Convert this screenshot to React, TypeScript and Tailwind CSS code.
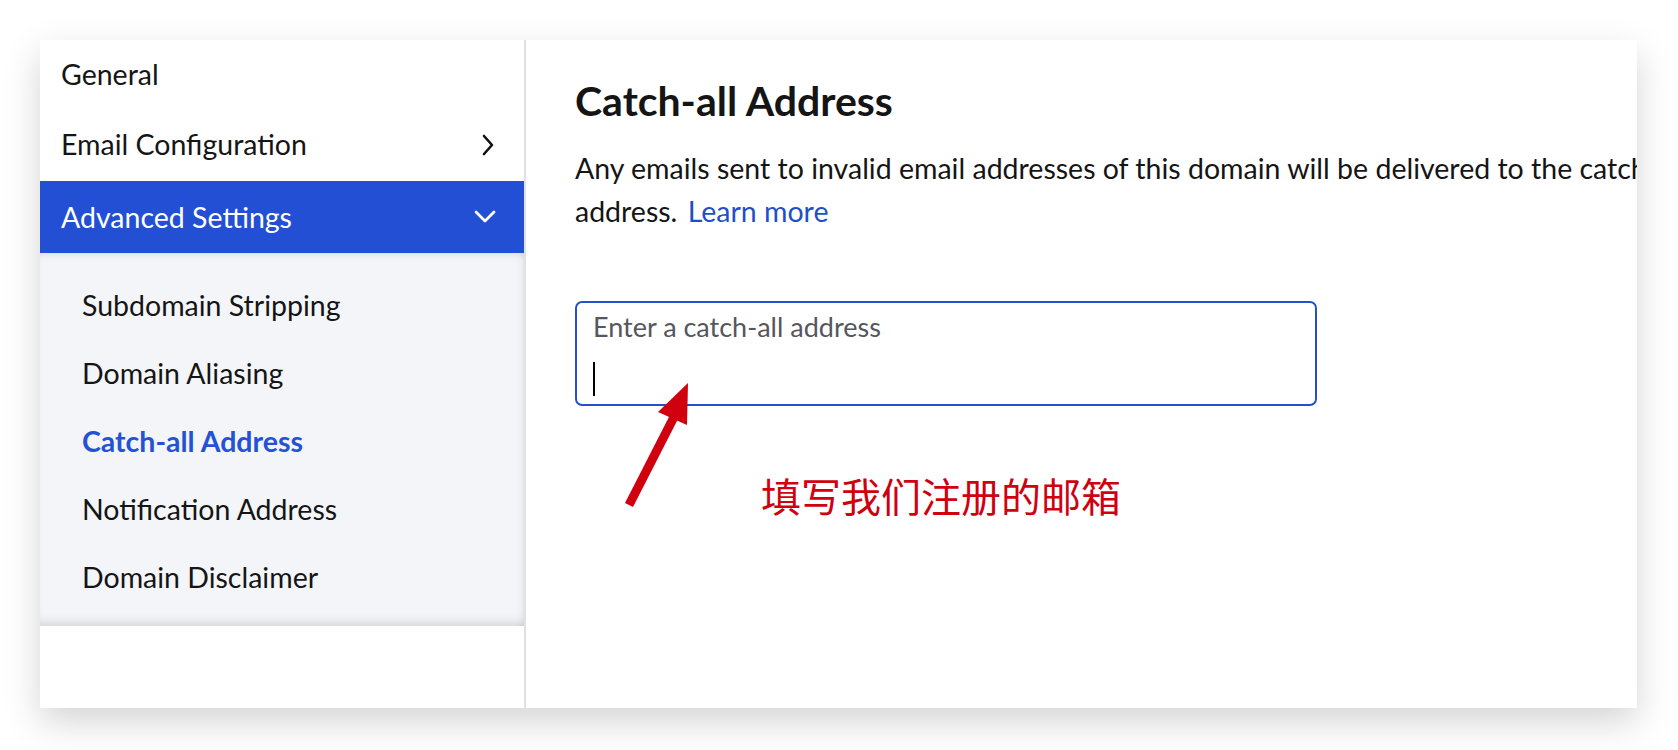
import React from 'react';

const subItems = [
  { label: 'Subdomain Stripping', active: false },
  { label: 'Domain Aliasing', active: false },
  { label: 'Catch-all Address', active: true },
  { label: 'Notification Address', active: false },
  { label: 'Domain Disclaimer', active: false },
];

function ChevronRight() {
  return (
    <svg width="12" height="22" viewBox="0 0 12 22" fill="none">
      <path d="M2 2 L10 11 L2 20" stroke="#111" strokeWidth="2.6" strokeLinecap="round" strokeLinejoin="round" />
    </svg>
  );
}

function ChevronDown() {
  return (
    <svg width="22" height="14" viewBox="0 0 22 14" fill="none">
      <path d="M2 2 L11 11 L20 2" stroke="#fff" strokeWidth="2.8" strokeLinecap="round" strokeLinejoin="round" />
    </svg>
  );
}

function Sidebar() {
  return (
    <aside className="w-[486px] shrink-0 flex flex-col border-r-2 border-[#e1e1e3] bg-white">
      <div className="h-[68px] flex items-center pl-[21px] text-[28.5px] text-[#151515]">General</div>
      <div className="h-[73px] flex items-center justify-between pl-[21px] pr-[30px] text-[28.5px] text-[#151515]">
        <span>Email Configuration</span>
        <ChevronRight />
      </div>
      <div className="h-[72px] flex items-center justify-between pl-[21px] pr-[28px] bg-[#224fd4] text-[28.5px] text-white">
        <span>Advanced Settings</span>
        <ChevronDown />
      </div>
      <div className="h-[373px] bg-[#f4f5f9] pt-[18px] pl-[42px] shadow-[inset_0_8px_10px_-8px_rgba(0,0,0,0.14),inset_0_-10px_12px_-8px_rgba(0,0,0,0.16),inset_-8px_0_10px_-8px_rgba(0,0,0,0.1)]">
        {subItems.map((item) => (
          <div
            key={item.label}
            className={`h-[68px] flex items-center text-[28.5px] ${
              item.active ? 'font-bold text-[#2452d6]' : 'text-[#151515]'
            }`}
          >
            {item.label}
          </div>
        ))}
      </div>
      <div className="flex-1 bg-white" />
    </aside>
  );
}

function Annotation() {
  return (
    <div className="relative h-[120px]">
      <svg className="absolute left-[40px] top-[-25px]" width="80" height="135" viewBox="0 0 80 135" fill="none">
        <path d="M14 124 L60 34" stroke="#d0000f" strokeWidth="9" />
        <path d="M73 2 L43 31 L72 44 Z" fill="#d0000f" />
      </svg>
      <div className="absolute left-[186px] top-[64px] text-[40px] leading-[50px] text-[#d0000f] font-['Noto_Sans_CJK_SC',sans-serif]">
        填写我们注册的邮箱
      </div>
    </div>
  );
}

function Content() {
  return (
    <main className="flex-1 min-w-0 pl-[49px] pt-[38px]">
      <h1 className="text-[41px] leading-[46px] font-bold text-[#151515]">Catch-all Address</h1>
      <p className="w-[1160px] mt-[23px] text-[28.5px] leading-[43px] text-[#151515]">
        Any emails sent to invalid email addresses of this domain will be delivered to the catch-all address.{' '}
        <span className="ml-[3px] text-[#1f4fc6]">Learn more</span>
      </p>
      <div className="mt-[68px] w-[742px] h-[105px] border-2 border-[#2450d0] rounded-[7px] pl-[16px] pt-[9px]">
        <div className="text-[27px] leading-[30px] text-[#55565e]">Enter a catch-all address</div>
        <div className="mt-[20px] w-[2px] h-[34px] bg-black" />
      </div>
      <Annotation />
    </main>
  );
}

export default function App() {
  return (
    <div className="w-[1678px] h-[750px] bg-white pt-[40px] pl-[40px] overflow-hidden font-['Lato',sans-serif]">
      <div className="flex w-[1597px] h-[668px] bg-white overflow-hidden shadow-[0_14px_34px_rgba(0,0,0,0.17)]">
        <Sidebar />
        <Content />
      </div>
    </div>
  );
}
